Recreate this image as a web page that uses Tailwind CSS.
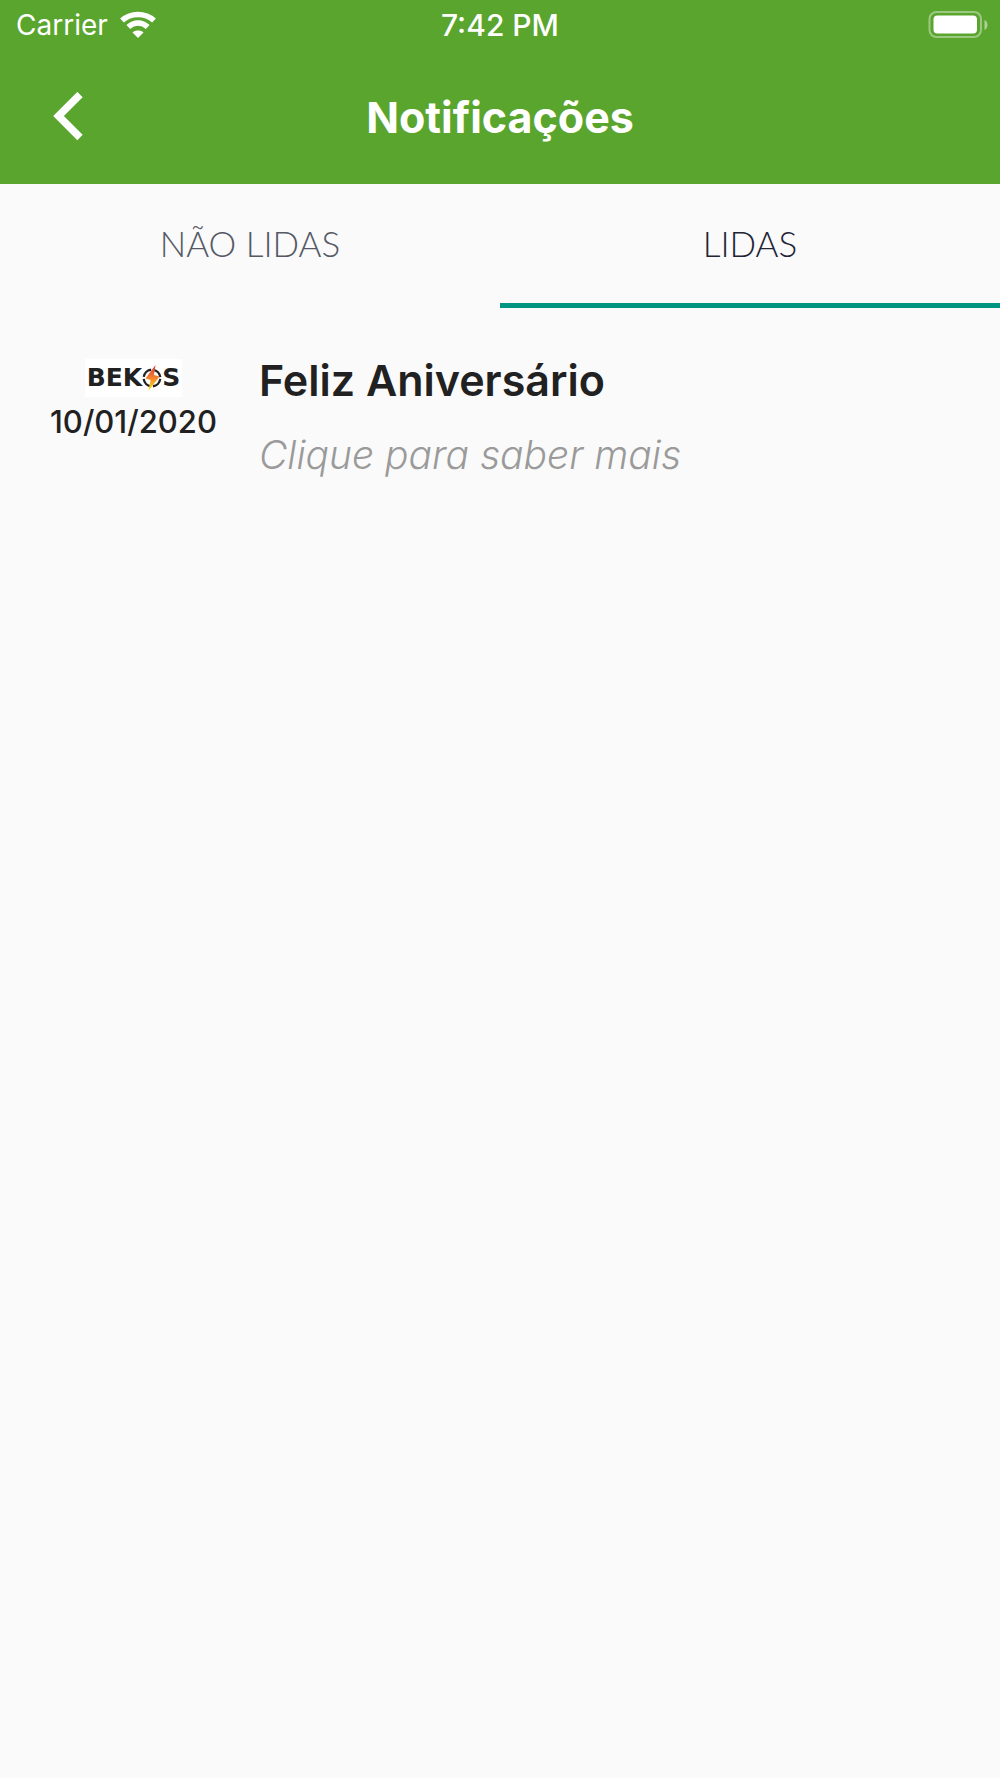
<!DOCTYPE html>
<html lang="pt-BR">
<head>
    <meta charset="UTF-8">
    <meta name="viewport" content="width=device-width, initial-scale=1.0">
    <title>Notificações</title>

    <script src="https://cdn.jsdelivr.net/npm/@tailwindcss/browser@4"></script>
</head>
<body class="min-h-screen bg-[#fafafa] font-['Inter',sans-serif] text-[#212121]">

    <header class="bg-[#5aa52d] text-white">

        <!-- status bar -->
        <div class="grid grid-cols-3 items-center h-[50px] px-4 text-[28px]">
            <div class="flex items-center gap-3">
                <span>Carrier</span>
                <svg class="w-9 h-7" viewBox="0 0 36 28" fill="none" stroke="currentColor" stroke-width="5.500">
                    <path d="M2 9.500C11 1.400 25 1.400 34 9.500" />
                    <path d="M8.300 16C14 10.700 22 10.700 27.700 16" />
                    <path d="M18 27l-5.500-5.600c3-2.600 8-2.600 11 0z" fill="currentColor" stroke="none" />
                </svg>
            </div>
            <span class="text-center text-3xl font-medium">7:42 PM</span>
            <svg class="justify-self-end -mr-1 w-[60px] h-7" viewBox="0 0 60 28" fill="currentColor">
                <rect x="1.500" y="1" width="51.500" height="25" rx="7" fill="none" stroke="currentColor" stroke-width="2" opacity=".4" />
                <rect x="5.500" y="4.500" width="43.500" height="18" rx="4" />
                <path d="M56.500 9c4 1.500 4 8.500 0 10z" opacity=".5" />
            </svg>
        </div>

        <!-- title bar -->
        <div class="grid grid-cols-[120px_1fr_120px] items-center h-[134px]">
            <button type="button" aria-label="Voltar" class="h-full pl-[52px] cursor-pointer">
                <svg class="w-8 h-[50px]" viewBox="0 0 32 50" fill="none" stroke="currentColor" stroke-width="7.500">
                    <path d="M28 2.500L6.500 24 28 45.500" />
                </svg>
            </button>
            <h1 class="text-center text-[43px] font-bold">Notificações</h1>
        </div>
    </header>

    <nav class="grid grid-cols-2 h-[124px] text-[35px] font-light font-['Lato',sans-serif]">
        <button type="button" class="border-b-5 border-transparent text-[#555966] cursor-pointer">NÃO LIDAS</button>
        <button type="button" class="border-b-5 border-[#009580] text-[#1f2435] cursor-pointer">LIDAS</button>
    </nav>

    <main>
        <a href="#" class="flex items-start gap-[42px] px-[50px] pt-[51px]">
            <div class="flex flex-col items-center">
                <div class="flex items-center justify-center h-[38px] px-0.5 bg-white text-[25px] font-bold font-['DejaVu_Sans',sans-serif]">
                    <span>BEK</span>
                    <!-- the O of the logo -->
                    <svg class="w-5 h-7" viewBox="0 0 20 28" role="img" aria-label="O">
                        <defs>
                            <linearGradient id="bolt" x1="0" y1="0" x2="0" y2="1">
                                <stop offset="0" stop-color="#d8343a" />
                                <stop offset=".5" stop-color="#f5822c" />
                                <stop offset="1" stop-color="#fdf01a" />
                            </linearGradient>
                        </defs>
                        <circle cx="10" cy="14" r="8.300" fill="none" stroke="#212121" stroke-width="2.300" stroke-dasharray="11 2" stroke-dashoffset="-1" />
                        <path d="M13.500 1L3.500 14.500l5 1.500L6.500 27l11-14.500-5.500-1.500z" fill="url(#bolt)" />
                    </svg>
                    <span>S</span>
                </div>
                <time datetime="2020-01-10" class="text-[31px] leading-[50px] font-medium">10/01/2020</time>
            </div>
            <div>
                <h2 class="text-[43px] leading-[42px] font-semibold">Feliz Aniversário</h2>
                <p class="pt-6 text-[39px] leading-[60px] font-light italic text-[#9a9a9a]">Clique para saber mais</p>
            </div>
        </a>
    </main>

</body>
</html>
